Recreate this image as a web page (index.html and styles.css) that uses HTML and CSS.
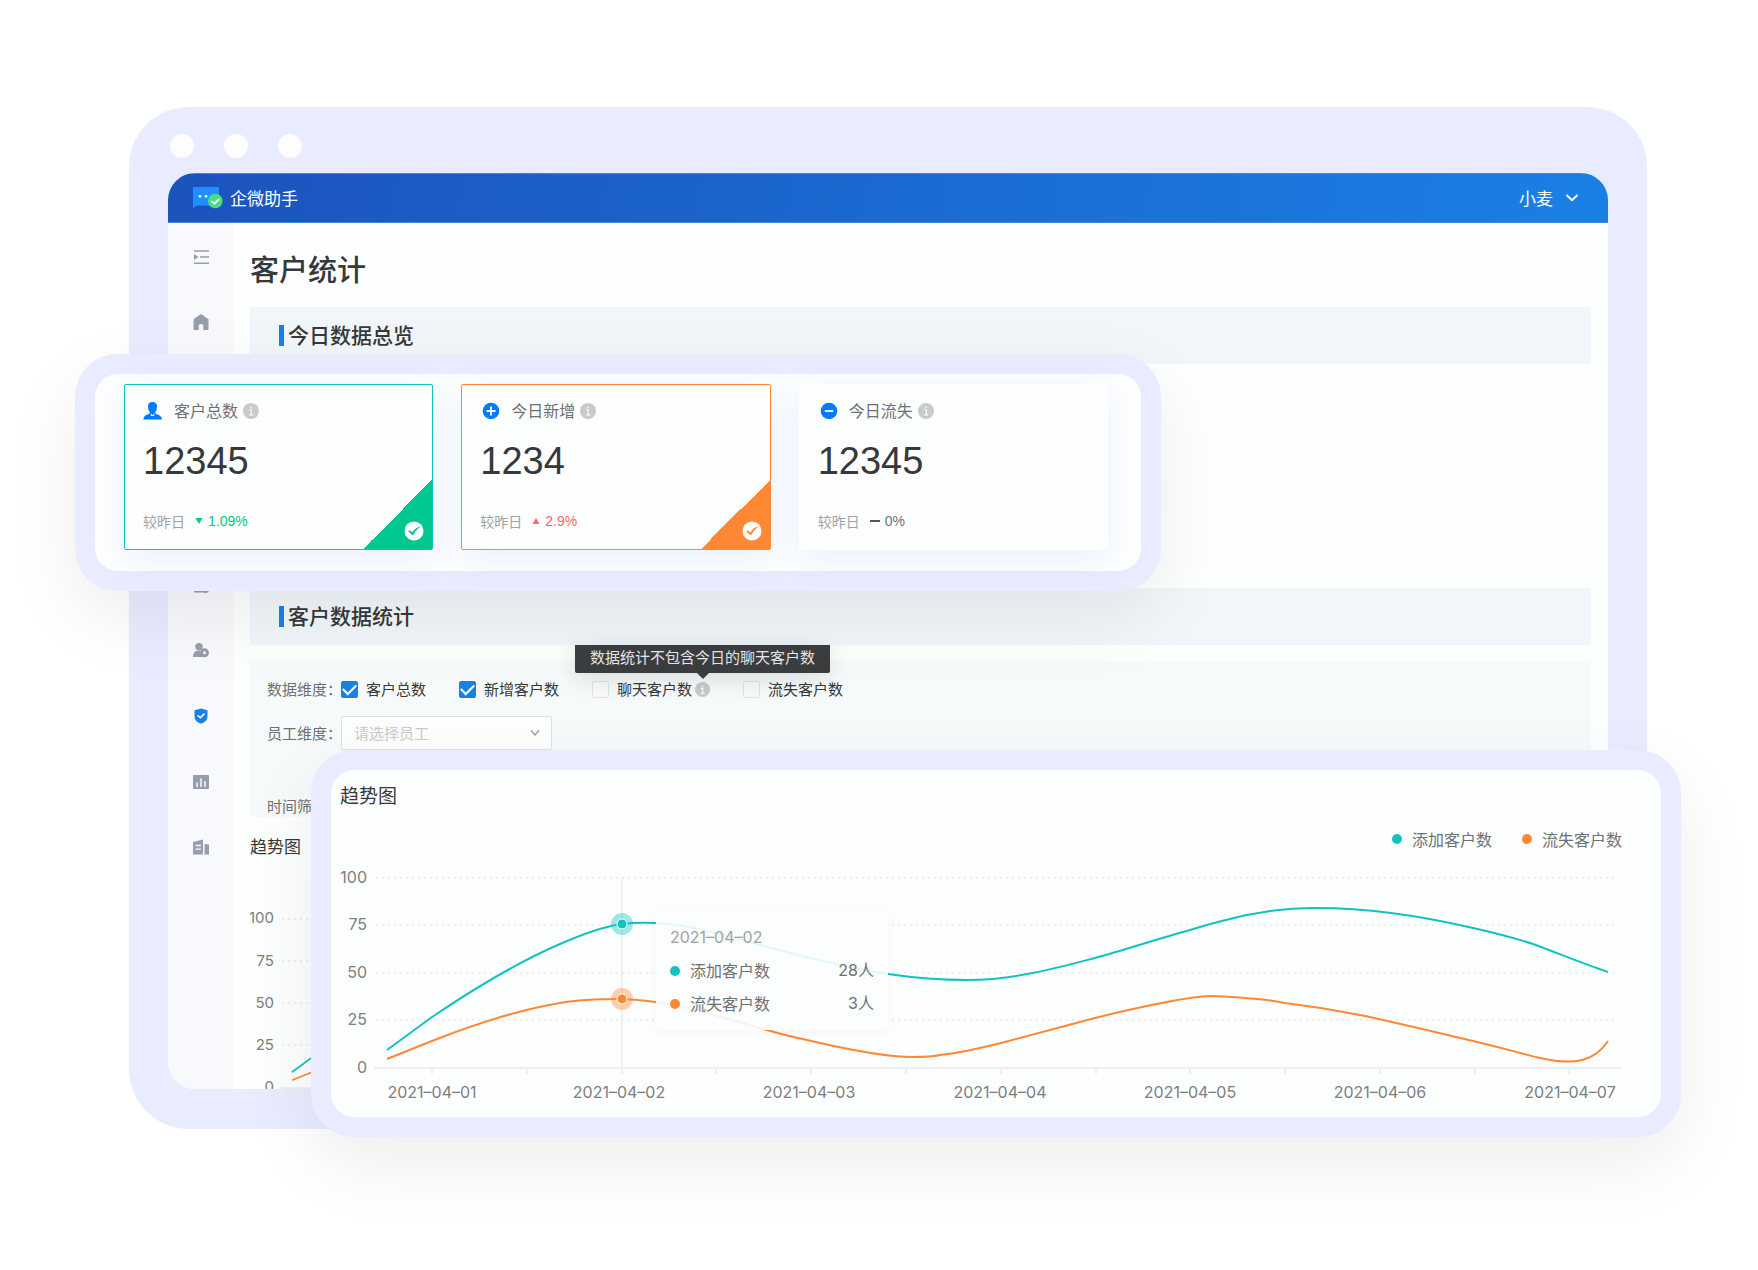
FILE: index.html
```html
<!DOCTYPE html>
<html lang="zh-CN">
<head>
<meta charset="utf-8">
<title>企微助手 - 客户统计</title>
<meta name="viewport" content="width=device-width, initial-scale=1">
<link rel="stylesheet" href="styles.css">
</head>
<body>
<svg class="defs" aria-hidden="true">
  <symbol id="info" viewBox="0 0 16 16">
    <circle cx="8" cy="8" r="8" fill="#c9caca"/>
    <path d="M6.300 6.800h2v5M6 12h4.300" fill="none" stroke="#fff" stroke-width="1.100"/>
    <circle cx="8" cy="4.500" r=".8" fill="#fff"/>
  </symbol>
  <symbol id="tick" viewBox="0 0 20 20">
    <circle cx="10" cy="10" r="9.500" fill="#fff"/>
    <path d="M4.200 10.500l1.800-1.300 2.200 2.300Q11.500 7 15.500 5.300L15.800 6Q12 9 8.800 14.500z" fill="currentColor"/>
  </symbol>
  <symbol id="series" viewBox="0 0 1282 264" overflow="visible">
    <path class="line-teal" d="M47 198C62 187 77 176 92 165C135 136 178 110 220 92C243 82 262 75 281 72C335 66 380 82 427 95C468 106 508 116 548 122C575 126 600 128 627 128C648 128 668 126 687 122C710 118 732 112 755 106C787 97 818 87 850 78C863 74 877 70 890 67C903 63 917 61 930 59C945 57 961 56 977 56C1035 56 1090 66 1133 76C1155 81 1175 86 1193 92C1220 102 1244 112 1268 120"/>
    <path class="line-orange" d="M47 207C62 201 77 195 92 189C135 172 178 158 220 151C242 147 262 147 281 147C330 148 380 165 427 178C440 182 453 185 467 188C505 197 545 205 573 205C582 205 592 205 600 203C620 201 641 196 661 191C692 183 724 174 755 166C787 158 818 151 850 146C857 145 863 144 870 144C886 144 902 146 917 147C927 148 936 149 945 151C970 154 995 158 1020 163C1058 171 1095 180 1133 189C1158 195 1180 201 1200 206C1235 214 1255 209 1268 189"/>
  </symbol>
</svg>

<div class="stage">
  <div class="window">
    <div class="dots"><i></i><i></i><i></i></div>
    <div class="app">
      <header class="topbar">
        <div class="brand">
          <svg width="30" height="22" viewBox="0 0 30 22" aria-hidden="true">
            <path d="M0 0h26v18.500H4L0 21z" fill="#1f8fff"/>
            <circle cx="7" cy="9.300" r="1.400" fill="#fff"/><circle cx="13" cy="9.300" r="1.400" fill="#fff"/>
            <circle cx="22.300" cy="14" r="7.300" fill="#4bdd86"/>
            <path d="M18.600 14l2.700 2.800 4.800-5" fill="none" stroke="#fff" stroke-width="1.800"/>
          </svg>
          <span>企微助手</span>
        </div>
        <button class="user" type="button"><span>小麦</span>
          <svg width="14" height="10" viewBox="0 0 14 10" aria-hidden="true"><path d="M1.500 2l5.500 5.200L12.500 2" fill="none" stroke="#fff" stroke-width="2"/></svg>
        </button>
      </header>
      <div class="body">
        <nav class="sidebar" aria-label="主导航">
          <a href="#menu" aria-label="展开菜单"><svg width="16" height="16" viewBox="0 0 16 16"><path d="M1 2h15M7 8h9M1 14.200h15" stroke="currentColor" stroke-width="1.400"/><path d="M1 5l4.500 3L1 11z" fill="currentColor"/></svg></a>
          <a href="#home" aria-label="首页"><svg width="16" height="16" viewBox="0 0 16 16"><path d="M8 0l7.500 5.200V15.200q0 .8-.8.800H10.300v-4.200q0-1.800-2.300-1.800t-2.300 1.800V16H1.300q-.8 0-.8-.8V5.200z" fill="currentColor"/></svg></a>
          <a href="#message" aria-label="消息"></a>
          <a href="#material" aria-label="素材"></a>
          <a href="#group" aria-label="群"></a>
          <a href="#staff-list" aria-label="员工"><svg width="16" height="16" viewBox="0 0 16 16"><circle cx="6" cy="4" r="3.500" fill="currentColor"/><path d="M1 15.500q0-7.500 5-7.500 3 0 4 2v5.500z" fill="currentColor"/><circle cx="12.500" cy="12.500" r="2.600" fill="#f8f9fc" stroke="currentColor" stroke-width="1.800"/></svg></a>
          <a href="#customer" aria-label="客户"><svg width="16" height="16" viewBox="0 0 16 16"><circle cx="6" cy="4.700" r="3.700" fill="currentColor"/><path d="M0 15q0-5 3.500-6.300l5.500.3v6z" fill="currentColor"/><circle cx="11.500" cy="10.800" r="3" fill="#f8f9fc" stroke="currentColor" stroke-width="3"/></svg></a>
          <a href="#stats" class="active" aria-label="客户统计"><svg width="14" height="16" viewBox="0 0 14 16"><path d="M7 .5L13.500 2.300V8.300Q13.500 13.500 7 15.800Q.5 13.500.5 8.300V2.300z" fill="currentColor"/><path d="M3.600 7.200L6.300 9.800 10.500 5.600" fill="none" stroke="#fff" stroke-width="1.500"/></svg></a>
          <a href="#report" aria-label="报表"><svg width="16" height="16" viewBox="0 0 16 16"><rect y="1" width="16" height="14" rx="1" fill="currentColor"/><path d="M4 8.500V13M8 4.500V13M12 7V13" stroke="#f8f9fc" stroke-width="1.500"/></svg></a>
          <a href="#company" aria-label="企业"><svg width="16" height="16" viewBox="0 0 16 16"><path d="M0 3L10 .5V15.500H0z" fill="currentColor"/><path d="M2.500 6.500H8M2.500 10.200H8" stroke="#f8f9fc" stroke-width="1.300"/><path d="M11.500 5L16 5.500V15.500H11.500z" fill="currentColor"/></svg></a>
        </nav>
        <main class="main">
          <h1>客户统计</h1>
          <h2 class="section-title">今日数据总览</h2>
          <div class="overview-space"></div>
          <h2 class="section-title">客户数据统计</h2>
          <form class="filters">
            <div class="row">
              <span class="label">数据维度：</span>
              <div class="options">
                <label><input type="checkbox" checked>客户总数</label>
                <label><input type="checkbox" checked>新增客户数</label>
                <div class="option-tip">
                  <label><input type="checkbox">聊天客户数</label>
                  <svg class="info-small" aria-hidden="true"><use href="#info"/></svg>
                  <div class="tip" role="tooltip">数据统计不包含今日的聊天客户数</div>
                </div>
                <label><input type="checkbox">流失客户数</label>
              </div>
            </div>
            <div class="row">
              <label class="label" for="staff">员工维度：</label>
              <div class="select">
                <select id="staff"><option>请选择员工</option></select>
                <svg width="10" height="8" viewBox="0 0 10 8" aria-hidden="true"><path d="M1 1.500L5 6l4-4.500" fill="none" stroke="#999" stroke-width="1.200"/></svg>
              </div>
            </div>
            <div class="row row-time"><span class="label">时间筛选：</span></div>
          </form>
          <h3 class="trend-title">趋势图</h3>
          <svg class="mini-chart" aria-hidden="true">
            <g class="axis-text">
              <text x="24" y="64">100</text><text x="24" y="107">75</text><text x="24" y="149">50</text><text x="24" y="191">25</text><text x="24" y="233">0</text>
            </g>
            <g class="grid"><path d="M32 60H1340M32 102H1340M32 144H1340M32 186H1340"/></g>
            <path class="axis" d="M31 229H1340"/>
            <use href="#series" width="1141" height="235" x="0" y="37"/>
          </svg>
        </main>
      </div>
    </div>
  </div>

  <section class="float float-cards" aria-label="今日数据总览">
    <article class="card card-teal">
      <h3><svg width="20" height="20" viewBox="0 0 20 20" aria-hidden="true"><path d="M9.500 1Q14 1 14 5.500Q14 9 12.300 11Q12 12.500 13 13Q18.700 14 19 18.500H.3Q.6 14 6 13Q7 12.500 6.700 11Q5 9 5 5.500Q5 1 9.500 1z" fill="#007bff"/><path d="M7.500 12.500l2 1.500 2-1.500-.4 2.500H8z" fill="#fff"/></svg>客户总数<svg class="info" aria-hidden="true"><use href="#info"/></svg></h3>
      <p class="number">12345</p>
      <p class="compare">较昨日<svg width="8" height="6" viewBox="0 0 8 6" aria-hidden="true"><path d="M.5 0h7L4 6z" fill="currentColor"/></svg><b>1.09%</b></p>
      <svg class="corner-tick" aria-label="已选择"><use href="#tick"/></svg>
    </article>
    <article class="card card-orange">
      <h3><svg width="20" height="20" viewBox="0 0 20 20" aria-hidden="true"><circle cx="11" cy="10" r="8.300" fill="#007bff"/><path d="M6.500 10h9M11 5.500v9" stroke="#fff" stroke-width="1.800"/></svg>今日新增<svg class="info" aria-hidden="true"><use href="#info"/></svg></h3>
      <p class="number">1234</p>
      <p class="compare">较昨日<svg width="8" height="6" viewBox="0 0 8 6" aria-hidden="true"><path d="M.5 6h7L4 0z" fill="currentColor"/></svg><b>2.9%</b></p>
      <svg class="corner-tick" aria-label="已选择"><use href="#tick"/></svg>
    </article>
    <article class="card">
      <h3><svg width="20" height="20" viewBox="0 0 20 20" aria-hidden="true"><circle cx="11" cy="10" r="8.300" fill="#007bff"/><path d="M6.800 10h8.600" stroke="#fff" stroke-width="1.800"/></svg>今日流失<svg class="info" aria-hidden="true"><use href="#info"/></svg></h3>
      <p class="number">12345</p>
      <p class="compare">较昨日<svg width="10" height="6" viewBox="0 0 10 6" aria-hidden="true"><path d="M0 3h10" stroke="currentColor" stroke-width="2"/></svg><b>0%</b></p>
    </article>
  </section>

  <section class="float float-trend">
    <h3>趋势图</h3>
    <ul class="legend"><li class="teal">添加客户数</li><li class="orange">流失客户数</li></ul>
    <div class="chart">
      <svg viewBox="0 0 1282 264" role="img" aria-label="客户趋势图">
        <g class="axis-text">
          <text x="27" y="31">100</text><text x="27" y="78">75</text><text x="27" y="126">50</text><text x="27" y="173">25</text><text x="27" y="221">0</text>
        </g>
        <path class="grid" d="M36 26H1278M36 73H1278M36 121H1278M36 168H1278"/>
        <path class="axis" d="M34 216H1281M92 216v6M187 216v6M376 216v6M471 216v6M566 216v6M661 216v6M756 216v6M850 216v6M945 216v6M1040 216v6M1135 216v6M1229 216v6"/>
        <path class="axis" d="M282 26V222"/>
        <g class="date-text">
          <text x="92" y="246">2021–04–01</text><text x="279" y="246">2021–04–02</text><text x="469" y="246">2021–04–03</text><text x="660" y="246">2021–04–04</text><text x="850" y="246">2021–04–05</text><text x="1040" y="246">2021–04–06</text><text x="1230" y="246">2021–04–07</text>
        </g>
        <use href="#series" width="1282" height="264"/>
        <circle cx="282" cy="72" r="11" fill="#12c2c2" fill-opacity=".4"/><circle cx="282" cy="72" r="5" fill="#12c2c2" stroke="#fff"/>
        <circle cx="282" cy="147" r="11" fill="#ff8834" fill-opacity=".4"/><circle cx="282" cy="147" r="5" fill="#ff8834" stroke="#fff"/>
      </svg>
      <div class="chart-tip">
        <p class="date">2021–04–02</p>
        <p class="teal">添加客户数<span>28人</span></p>
        <p class="orange">流失客户数<span>3人</span></p>
      </div>
    </div>
  </section>
</div>
</body>
</html>
```
FILE: styles.css
```css
* { box-sizing: border-box; }

body {
  margin: 0;
  background: #fff;
  color: #363839;
  font-family: "Noto Sans CJK SC", sans-serif;
  font-size: 15px;
}

h1, h2, h3, p, ul { margin: 0; padding: 0; font-weight: 400; }
svg { display: block; flex: none; }
.defs { position: absolute; width: 0; height: 0; }

.stage {
  position: relative;
  padding: 107px 111px 141px 129px;
  overflow: hidden;
}

.window {
  padding: 27px 39px 40px;
  border-radius: 60px;
  background: #e9ebff;
}

.dots { display: flex; gap: 30px; padding: 0 2px 15px; }
.dots i { width: 24px; height: 24px; border-radius: 50%; background: #fdfdfd; }

.app {
  overflow: hidden;
  border-radius: 27px;
  background: #fdfefe;
}

.topbar {
  display: flex;
  align-items: center;
  justify-content: space-between;
  height: 50px;
  padding: 0 29px 0 25px;
  border: solid #3f86e2;
  border-width: 1px 0;
  background: linear-gradient(100deg, #1c53bd, #1a80e5);
  color: #fff;
  font-size: 17px;
}
.topbar span { padding-bottom: 2px; }
.brand { display: flex; align-items: center; gap: 7px; }
.user {
  display: flex;
  align-items: center;
  gap: 12px;
  padding: 0;
  border: 0;
  background: none;
  color: inherit;
  font: inherit;
}

.body { display: flex; }

.sidebar {
  display: flex;
  flex-direction: column;
  width: 65px;
  padding: 1px 0 209px;
  background: #f8f9fc;
}
.sidebar a {
  display: flex;
  flex: 1;
  align-items: center;
  justify-content: center;
  color: #989dab;
}
.sidebar .active { color: #1a80e5; }

.main { flex: 1; min-width: 0; padding: 25px 17px 0; }
h1 { margin-bottom: 19px; font-size: 29px; line-height: 40px; font-weight: 500; }

.section-title {
  display: flex;
  align-items: center;
  gap: 4px;
  height: 57px;
  padding: 0 0 4px 29px;
  background: #f1f6fa;
  font-size: 21px;
  font-weight: 500;
}
.section-title::before {
  content: "";
  width: 5px;
  height: 21px;
  margin-top: 4px;
  background: #1a80e5;
}
.overview-space { height: 224px; }

.filters { margin-top: 16px; padding: 11px 17px 0; background: #f7fafb; }
.row { display: flex; align-items: center; height: 34px; margin-bottom: 10px; }
.row-time { height: 22px; margin: 45px 0 0; }
.label { width: 74px; padding-bottom: 2px; color: #6e7173; white-space: nowrap; }
.options { display: flex; gap: 33px; }
.options label { display: flex; align-items: center; gap: 8px; padding-bottom: 2px; white-space: nowrap; }
.options input {
  display: grid;
  place-items: center;
  width: 17px;
  height: 17px;
  margin: 2px 0 0;
  border: 1px solid #e2e3e5;
  border-radius: 2px;
  background: #fafafb;
  appearance: none;
}
.options input:checked { border-color: #1a80e5; background: #1a80e5; }
.options input:checked::after {
  content: "";
  width: 11px;
  height: 6px;
  margin-bottom: 3px;
  border: solid #fff;
  border-width: 0 0 2px 2px;
  rotate: -45deg;
}
.option-tip { position: relative; display: flex; align-items: center; gap: 3px; }
.info-small { width: 15px; height: 15px; }
.tip {
  position: absolute;
  right: -120px;
  bottom: 28px;
  width: 255px;
  height: 28px;
  border-radius: 0 0 2px 2px;
  background: #3c3d3f;
  box-shadow: 0 6px 24px rgba(0, 0, 0, .12);
  color: #e6e7e8;
  line-height: 23px;
  text-align: center;
  white-space: nowrap;
}
.tip::after {
  content: "";
  position: absolute;
  top: 100%;
  left: 50%;
  margin-left: -6px;
  border: 6px solid transparent;
  border-top-color: #3c3d3f;
  border-bottom: 0;
}

.select { position: relative; width: 211px; }
.select select {
  display: block;
  width: 100%;
  height: 34px;
  padding: 0 12px 2px;
  border: 1px solid #dfe1e3;
  border-radius: 2px;
  background: #fdfefe;
  color: #c8cacc;
  font: inherit;
  appearance: none;
}
.select svg { position: absolute; right: 12px; top: 13px; }

.trend-title { padding: 17px 0 1px; font-size: 17px; line-height: 24px; }
.mini-chart { width: 100%; height: 230px; overflow: hidden; }

.float {
  position: absolute;
  border: 20px solid #e9ebff;
  border-radius: 43px;
  background: #fdfefe;
  box-shadow: 0 27px 76px rgba(0, 0, 0, .07);
}

.float-cards {
  top: 354px;
  left: 75px;
  right: 597px;
  display: flex;
  gap: 28px;
  padding: 10px 33px 21px 29px;
}
.card {
  position: relative;
  flex: 1;
  padding: 13px 18px 18px;
  border: 1px solid transparent;
  border-radius: 2px;
  background: #fdfefe;
  box-shadow: 0 8px 34px rgba(60, 130, 255, .1);
}
.card-teal { border-color: #12c2c2; --corner: #00c68f; --change: #00c68f; }
.card-orange { border-color: #ff8834; --corner: #ff8834; --change: #ff6370; }
.card-teal, .card-orange {
  background: linear-gradient(135deg, #fdfefe 50%, var(--corner) 50%) right bottom / 69px 69px no-repeat #fdfefe;
}
.card h3 { display: flex; align-items: center; gap: 11px; color: #6e7173; font-size: 16px; line-height: 24px; }
.card h3 svg { margin-top: 2px; }
.card .info { width: 16px; height: 16px; margin-left: -6px; }
.number { margin-top: 17px; font: 38px/44px "Liberation Sans", sans-serif; }
.compare { display: flex; align-items: center; margin-top: 28px; color: #a0a2a4; font-size: 14px; line-height: 20px; }
.compare svg { margin: 0 5px 0 10px; color: var(--change, #55585a); }
.compare b { color: var(--change, #6e7173); font-family: "Liberation Sans", sans-serif; font-weight: 400; }
.corner-tick { position: absolute; right: 8px; bottom: 8px; width: 20px; height: 20px; color: var(--corner); }

.float-trend {
  top: 750px;
  left: 311px;
  right: 77px;
  padding: 11px 39px 1px 9px;
}
.float-trend h3 { font-size: 19px; line-height: 28px; }
.legend {
  display: flex;
  justify-content: flex-end;
  gap: 30px;
  padding: 18px 0 1px;
  color: #6e7173;
  font-size: 16px;
  line-height: 24px;
  list-style: none;
}
.legend li, .chart-tip p { display: flex; align-items: center; }
.teal { --dot: #12c2c2; }
.orange { --dot: #ff8834; }
.legend li::before, .chart-tip .teal::before, .chart-tip .orange::before {
  content: "";
  width: 10px;
  height: 10px;
  margin-right: 10px;
  border-radius: 50%;
  background: var(--dot);
}

.chart { position: relative; }
.chart > svg { width: 100%; height: auto; }
.axis-text, .date-text { fill: #7c7f81; font-family: Inter, sans-serif; font-size: 16px; }
.mini-chart .axis-text { font-size: 15px; }
.axis-text { text-anchor: end; }
.date-text { text-anchor: middle; }
.grid { fill: none; stroke: #eceeef; stroke-width: 2; stroke-dasharray: 2 4; }
.axis { fill: none; stroke: #eef0f0; stroke-width: 2; }
.line-teal, .line-orange { fill: none; stroke: #12c2c2; stroke-width: 2; }
.line-orange { stroke: #ff8834; }

.chart-tip {
  position: absolute;
  top: 59px;
  left: 316px;
  width: 232px;
  padding: 10px 14px;
  border-radius: 6px;
  background: rgba(252, 253, 254, .9);
  box-shadow: 0 2px 14px rgba(70, 80, 150, .06);
  color: #6e7173;
  font-size: 16px;
  line-height: 33px;
}
.chart-tip span { margin-left: auto; font-family: Inter, "Noto Sans CJK SC", sans-serif; }
.chart-tip .date { color: #a0a2a4; font-family: Inter, sans-serif; }
```
